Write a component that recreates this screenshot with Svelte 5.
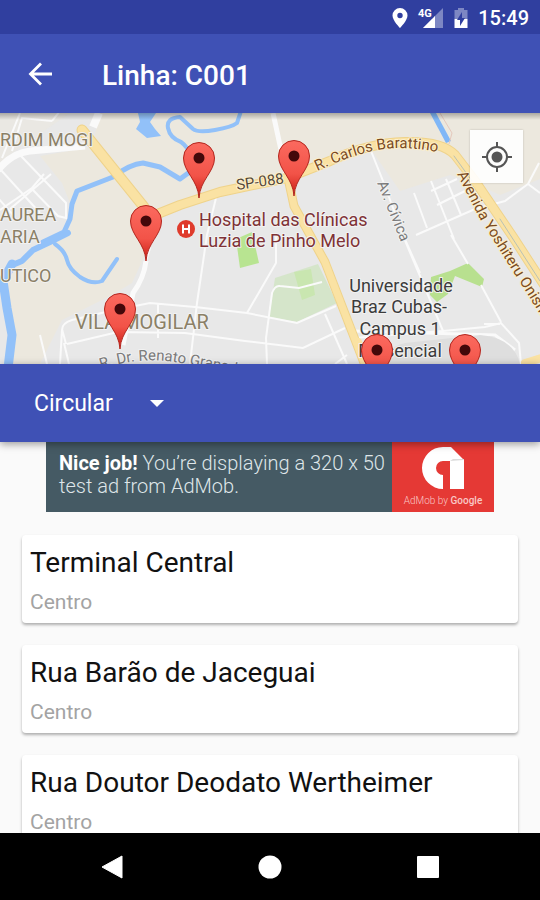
<script>
  let direction = $state('Circular');

  const stops = [
    { name: 'Terminal Central', district: 'Centro' },
    { name: 'Rua Barão de Jaceguai', district: 'Centro' },
    { name: 'Rua Doutor Deodato Wertheimer', district: 'Centro' }
  ];

  // pin positions, at the centre of the head
  const pins = [
    { x: 199, y: 45 },
    { x: 294, y: 43 },
    { x: 146, y: 108 },
    { x: 120, y: 196 },
    { x: 377, y: 237 },
    { x: 465, y: 237 }
  ];

  const areaLabels = [
    { x: 0, y: 33, text: 'RDIM MOGI' },
    { x: 0, y: 108, text: 'AUREA' },
    { x: 0, y: 130, text: 'ARIA' },
    { x: 0, y: 169, text: 'UTICO' }
  ];
</script>

<div class="screen">
  <div class="status">
    <svg width="16" height="20" viewBox="0 0 16 20" aria-hidden="true">
      <path fill="#fff" fill-rule="evenodd" d="M8 0a7.5 7.5 0 0 0-7.5 7.5C.5 12.500 8 20 8 20s7.500-7.500 7.500-12.500A7.500 7.500 0 0 0 8 0zm0 4.800a2.700 2.700 0 1 1 0 5.400 2.700 2.700 0 0 1 0-5.400z" />
    </svg>
    <svg class="signal" width="26" height="20" viewBox="0 0 26 20" aria-hidden="true">
      <path fill="#7d87c3" d="M25 0v20H5z" />
      <path fill="#303f9f" d="M0 0h16v11H0z" />
      <path fill="#fff" d="M17 8v12H5z" />
      <text x="0" y="9" class="network">4G</text>
    </svg>
    <svg width="14" height="20" viewBox="0 0 14 20" aria-hidden="true">
      <path fill="#7d87c3" d="M4 0h6v2h3.500v9H.5V2H4z" />
      <path fill="#fff" d="M.5 11h13v9H.5z" />
      <path fill="#303f9f" d="M8 4v6h3l-5 8v-6H3z" />
    </svg>
    <time>15:49</time>
  </div>

  <header class="toolbar">
    <button class="back" aria-label="Voltar">
      <svg width="24" height="24" viewBox="0 0 24 24">
        <path d="M13 1.500 2.500 12 13 22.500M2.500 12H24" fill="none" stroke="#fff" stroke-width="2.800" />
      </svg>
    </button>
    <h1>Linha: C001</h1>
  </header>

  <section class="map">
    <svg class="tiles" viewBox="0 0 540 251">
      <defs>
        <linearGradient id="pin-fill" x1="0" y1="0" x2="0" y2="1">
          <stop offset="0" stop-color="#fb6a5f" />
          <stop offset="0.6" stop-color="#f25348" />
          <stop offset="1" stop-color="#c91c14" />
        </linearGradient>
        <linearGradient id="top-shade" x1="0" y1="0" x2="0" y2="1">
          <stop offset="0" stop-color="#000" stop-opacity="0.280" />
          <stop offset="1" stop-color="#000" stop-opacity="0" />
        </linearGradient>
        <path id="carlos" d="M317 58Q368 34 402 35T460 46" />
        <path id="yoshiteru" d="M457 61L480 106L560 233" />
        <path id="renato" d="M101 256Q135 245 165 248T272 268" />
      </defs>

      <rect width="540" height="251" fill="#e8e8e8" />

      <!-- open land -->
      <g fill="#ece8de">
        <path d="M40 43L92 34L100 0H540V66L500 82L478 72L450 62L400 78L372 38L313 60L288 66L180 95L150 102L148 135L132 170L112 182L62 207L40 251H12L10 225L3 180L10 154L50 132L70 115L77 80L70 90L62 70Z" />
        <path d="M0 0H70L12 40L0 52Z" opacity="0.500" />
      </g>

      <!-- parks -->
      <path d="M275 165L318 151L337 190L297 209L269 204Z" fill="#d5e5ca" />
      <path d="M294 159L311 156L315 182L302 187Z" fill="#c9e6b0" />
      <path d="M236 126L252 119L259 150L240 155Z" fill="#b8e491" />
      <path d="M431 164L450 158L468 150L474 156L484 166L482 174L455 163L448 181L437 189L430 182Z" fill="#b8e08f" />

      <!-- water -->
      <g fill="none" stroke="#92c1f9" stroke-linejoin="round" stroke-linecap="round">
        <path stroke-width="5" d="M43 129L64 119L70 106L72 91L77 78L113 64Q130 51 143 50L160 54L180 66L191 58" />
        <path stroke-width="6" d="M68 120L50 129L33 137L22 148L10 153" />
        <path stroke-width="9" d="M12 151L3 168L7 195L12 222L8 255" />
        <path stroke-width="4" d="M55 131Q65 138 67 147T80 164Q92 172 102 168L117 146" />
        <path stroke-width="4" d="M241 -2L237 10Q232 14 215 17T193 16L180 4Q166 5 168 15T181 29Q188 34 190 42" />
      </g>
      <path fill="#92c1f9" d="M138 0H156L150 9L155 16L161 23L147 25L136 16L140 9Z" />
      <path fill="#80b7f7" d="M430 0L436 0L451 28L446 30Z" />
      <path fill="none" stroke="#e5c9bd" d="M440 0L452 20L449 31" />

      <!-- streets -->
      <g fill="none" stroke="#fafafa" stroke-width="2">
        <path stroke-width="7" d="M-2 57Q12 40 30 38L85 33" />
        <path stroke-width="8" d="M93 14L99 0" />
        <path d="M12 38L22 5L52 8M20 0L2 45M52 8L60 -2M20 42L66 90V105L58 103L32 76M0 56L40 100M51 61L10 96M-2 85L14 103M0 97L32 75L44 61" />
        <path stroke-width="5" d="M273 0L286 60M146 148Q144 165 133 180L123 232" />
        <path d="M146 148L150 135V123M216 85L207 122L197 190L190 251M276 122V150L247 200" />
        <path d="M60 251L62 217Q62 210 72 207L110 198L150 190L195 194L247 200L297 210L336 193M67 231L118 219L185 220L245 228L303 235L345 215M66 231L62 216M158 190V225M40 222L47 251M64 230L69 251M267 251L266 225L272 180Q275 172 280 173L299 175L322 169M325 201L347 251M335 251L347 242" />
        <path d="M371 38L383 68L406 130L420 163L443 218M403 122L420 160M451 122L468 151M481 172L501 209M414 80L427 115M431 68L454 126M416 122L475 96L505 88L528 71L540 80M528 71L539 50M431 78L457 66M437 92L465 78M446 66L461 102M354 225L443 218L485 214L501 210L519 230L521 251M484 211H500" />
        <path d="M354 218L495 222L515 237" stroke-width="3" />
      </g>
      <path d="M390 251Q380 237 405 230L480 222Q514 225 520 251Z" fill="#dedede" />

      <!-- main roads -->
      <g fill="none" stroke-linecap="round" stroke-linejoin="round">
        <g stroke="#efd38b">
          <path stroke-width="11" d="M82 17L144 94" />
          <path stroke-width="10" d="M150 104L180 92L220 79L287 65L330 48Q368 30 405 29T455 42L475 68L513 124L548 178" />
          <path stroke-width="9" d="M288 65L294 93L325 149L366 255" />
        </g>
        <g stroke="#fae2a3">
          <path stroke-width="9" d="M82 17L144 94" />
          <path stroke-width="8" d="M150 104L180 92L220 79L287 65L330 48Q368 30 405 29T455 42L475 68L513 124L548 178" />
          <path stroke-width="7" d="M288 65L294 93L325 149L366 255" />
          <path stroke-width="8" d="M525 250L545 244M358 229L366 250" />
        </g>
        <path stroke="#b9c1b4" d="M454 43L472 68M500 106L540 168" />
      </g>

      <g class="label area">
        {#each areaLabels as label}
          <text x={label.x} y={label.y}>{label.text}</text>
        {/each}
        <text class="district" x="75" y="216">VILA MOGILAR</text>
      </g>

      <g class="label road">
        <text x="237" y="77" transform="rotate(-8 237 77)">SP-088</text>
        <text class="warm"><textPath href="#carlos">R. Carlos Barattino</textPath></text>
        <text class="warm"><textPath href="#yoshiteru">Avenida Yoshiteru Onishi</textPath></text>
        <text class="minor" x="377" y="70" transform="rotate(68 377 70)">Av. Cívica</text>
        <text class="minor"><textPath href="#renato">R. Dr. Renato Granadeiro</textPath></text>
      </g>

      <g class="label hospital">
        <text x="199" y="113">Hospital das Clínicas</text>
        <text x="199" y="134">Luzia de Pinho Melo</text>
      </g>
      <circle cx="186" cy="116" r="9" fill="#df3b2c" />
      <path d="M183 111.500V120.500M189 111.500V120.500M183 116H189" stroke="#fff" stroke-width="2" />

      <g class="label campus">
        <text x="401" y="179">Universidade</text>
        <text x="399" y="200">Braz Cubas-</text>
        <text x="400" y="222">Campus 1</text>
        <text x="400" y="244">Presencial</text>
      </g>

      {#each pins as pin}
        <g transform="translate({pin.x} {pin.y})">
          <path
            d="M0 40C-1 22 -15.500 14 -15.500 0A15.500 15.500 0 0 1 15.500 0C15.500 14 1 22 0 40Z"
            fill="url(#pin-fill)"
            stroke="#b3261e"
          />
          <circle r="5.500" fill="#43080a" />
        </g>
      {/each}

      <rect width="540" height="7" fill="url(#top-shade)" />
    </svg>

    <button class="locate" aria-label="Minha localização">
      <svg width="30" height="30" viewBox="0 0 30 30">
        <circle cx="15" cy="15" r="10" fill="none" stroke="#555" stroke-width="2" />
        <circle cx="15" cy="15" r="5.500" fill="#555" />
        <path d="M15 0v6M15 24v6M0 15h6M24 15h6" stroke="#555" stroke-width="2" />
      </svg>
    </button>
  </section>

  <div class="direction">
    <select aria-label="Sentido" bind:value={direction}>
      <option>Circular</option>
    </select>
    <svg width="14" height="7" viewBox="0 0 14 7" aria-hidden="true">
      <path d="M0 0h14L7 7z" fill="#fff" />
    </svg>
  </div>

  <main>
    <aside class="ad">
      <p><b>Nice job!</b> You’re displaying a 320 x 50 test ad from AdMob.</p>
      <div class="brand">
        <svg width="44" height="44" viewBox="0 0 44 44" aria-hidden="true">
          <path fill="#fff" d="M22 43A21 21 0 0 1 22 1H30L43 14V43H29V15H22A7 7 0 0 0 22 29Z" />
          <path fill="#dcdcdc" d="M29 15L32 13H43V14Z" />
        </svg>
        <span>AdMob by <b>Google</b></span>
      </div>
    </aside>

    <ul>
      {#each stops as stop}
        <li>
          <h2>{stop.name}</h2>
          <p>{stop.district}</p>
        </li>
      {/each}
    </ul>
  </main>

  <nav>
    <button aria-label="Voltar">
      <svg width="22" height="24" viewBox="0 0 22 24"><path d="M21 1v22L1 12z" fill="#fff" stroke="#fff" stroke-linejoin="round" /></svg>
    </button>
    <button aria-label="Início">
      <svg width="24" height="24" viewBox="0 0 24 24"><circle cx="12" cy="12" r="11.500" fill="#fff" /></svg>
    </button>
    <button aria-label="Recentes">
      <svg width="22" height="22" viewBox="0 0 22 22"><rect width="22" height="22" rx="1" fill="#fff" /></svg>
    </button>
  </nav>
</div>

<style>
  :global(body) {
    margin: 0;
  }

  .screen {
    display: flex;
    flex-direction: column;
    height: 100vh;
    overflow: hidden;
    background: #fafafa;
    font-family: Roboto, sans-serif;
  }

  h1, h2, p, ul {
    margin: 0;
    padding: 0;
  }

  svg {
    display: block;
  }

  button {
    display: grid;
    place-items: center;
    padding: 0;
    border: 0;
    background: none;
  }

  .status {
    display: flex;
    flex: none;
    align-items: center;
    justify-content: flex-end;
    gap: 10px;
    height: 34px;
    padding: 2px 11px 0;
    box-sizing: border-box;
    background: #303f9f;
    color: #fff;
  }

  .signal {
    overflow: visible;
  }

  .network {
    fill: #fff;
    font-size: 11px;
    font-weight: 700;
  }

  time {
    font-size: 20px;
    font-weight: 500;
  }

  .toolbar {
    display: flex;
    flex: none;
    align-items: center;
    gap: 50px;
    height: 79px;
    padding: 0 28px;
    background: #3f51b5;
    color: #fff;
  }

  h1 {
    font-size: 28px;
    font-weight: 500;
    line-height: 36px;
    padding-top: 4px;
  }

  .map {
    position: relative;
    flex: none;
  }

  .tiles {
    width: 100%;
    height: auto;
  }

  .label {
    font-size: 18px;
    stroke: #f2f2f2;
    stroke-width: 2px;
    stroke-linejoin: round;
    paint-order: stroke;
  }

  .area {
    fill: #8b8066;
  }

  .district {
    font-size: 20px;
  }

  .road {
    fill: #55493a;
    font-size: 15px;
    stroke: #fdf0cc;
  }

  .road .warm {
    fill: #7a4a22;
  }

  .road .minor {
    fill: #7b7b7b;
    stroke: #f2f2f2;
  }

  .hospital {
    fill: #7f3236;
  }

  .campus {
    fill: #3c3c3c;
    text-anchor: middle;
  }

  .locate {
    position: absolute;
    top: 17px;
    right: 17px;
    width: 53px;
    height: 53px;
    background: rgba(255, 255, 255, 0.9);
    box-shadow: 0 0 2px rgba(0, 0, 0, 0.2);
  }

  .direction {
    position: relative;
    display: flex;
    flex: none;
    align-items: center;
    height: 78px;
    padding: 0 34px;
    background: #3f51b5;
    box-shadow: 0 2px 8px rgba(0, 0, 0, 0.4);
  }

  select {
    appearance: none;
    width: 130px;
    margin-right: -14px;
    padding: 2px 0 0;
    border: 0;
    background: none;
    color: #fff;
    font: 23px/32px Roboto, sans-serif;
  }

  .direction svg {
    pointer-events: none;
  }

  main {
    flex: 1;
    min-height: 0;
    overflow: hidden;
  }

  .ad {
    display: flex;
    width: 448px;
    height: 70px;
    margin: 0 auto 23px;
    background: #455a64;
    color: #dfe6e9;
  }

  .ad p {
    flex: 1;
    padding: 10px 0 0 13px;
    font-size: 20px;
    font-weight: 300;
    line-height: 23px;
  }

  .ad p b {
    color: #fff;
    font-weight: 700;
  }

  .brand {
    display: flex;
    flex-direction: column;
    align-items: center;
    gap: 4px;
    width: 102px;
    padding-top: 4px;
    box-sizing: border-box;
    background: #e53935;
  }

  .brand span {
    color: #f9c8c6;
    font-size: 10px;
    line-height: 14px;
    font-weight: 300;
    white-space: nowrap;
  }

  .brand b {
    font-weight: 500;
  }

  ul {
    display: grid;
    gap: 22px;
    padding: 0 22px;
    list-style: none;
  }

  li {
    height: 88px;
    padding: 8px;
    box-sizing: border-box;
    border-radius: 4px;
    background: #fff;
    box-shadow: 0 2px 3px rgba(0, 0, 0, 0.3);
  }

  h2 {
    color: #111;
    font-size: 28px;
    font-weight: 400;
    line-height: 40px;
  }

  li p {
    color: #a3a3a3;
    font-size: 21px;
    line-height: 39px;
  }

  nav {
    display: flex;
    flex: none;
    justify-content: center;
    gap: 134px;
    height: 67px;
    background: #000;
  }

  nav button {
    width: 24px;
  }
</style>
